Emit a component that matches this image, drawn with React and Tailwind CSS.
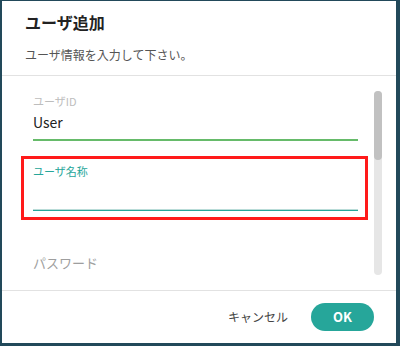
export default function App() {
  return (
    <div
      className="w-[400px] h-[346px] bg-[#22495a] pt-px pl-[2px] pr-[4px] pb-[3px]"
      style={{ fontFamily: '"Noto Sans CJK JP", "Noto Sans", sans-serif' }}
    >
      <div className="h-full bg-white flex flex-col">
        {/* Header */}
        <div className="h-[75px] shrink-0 border-b border-[#e2e2e2] pl-[23px] pt-[9px]">
          <h1 className="text-[16px] leading-[24px] font-semibold text-[#222]">ユーザ追加</h1>
          <p className="mt-[12px] text-[12px] leading-[18px] text-[#555]">
            ユーザ情報を入力して下さい。
          </p>
        </div>

        {/* Body */}
        <div className="h-[214px] shrink-0 flex overflow-hidden">
          <div className="w-[347px] ml-[19px] shrink-0">
            <div className="ml-[12px] mr-[10px] mt-[17px]">
              <div className="text-[11px] leading-[16px] text-[#bdbdbd]">ユーザID</div>
              <div className="mt-[3px] text-[14px] leading-[20px] text-[#222]">User</div>
              <div className="mt-[7px] h-[2px] bg-[#66bb6a]" />
            </div>

            <div className="mt-[15px] border-[3px] border-[#ff1a1a] pl-[9px] pr-[7px] pt-[4px] pb-[6px]">
              <div className="text-[11px] leading-[16px] text-[#26a69a]">ユーザ名称</div>
              <div className="mt-[30px] h-[2px] bg-[#26a69a] border-t border-[#b9dcd8]" />
            </div>

            <div className="mx-[12px] mt-[33px] text-[13px] leading-[20px] text-[#9e9e9e]">
              パスワード
            </div>
          </div>
          <div className="ml-[6px] py-[15px]">
            <div className="w-[8px] h-full rounded-full bg-[#e6e6e6]">
              <div className="h-[69px] rounded-full bg-[#c1c1c1]" />
            </div>
          </div>
        </div>

        {/* Footer */}
        <div className="flex-1 border-t border-[#e2e2e2] flex items-center justify-end pr-[22px]">
          <button className="text-[12px] text-[#444] mr-[23px]">キャンセル</button>
          <button className="w-[63px] h-[28px] rounded-full bg-[#26a69a] text-white text-[13px] font-bold">
            OK
          </button>
        </div>
      </div>
    </div>
  );
}
